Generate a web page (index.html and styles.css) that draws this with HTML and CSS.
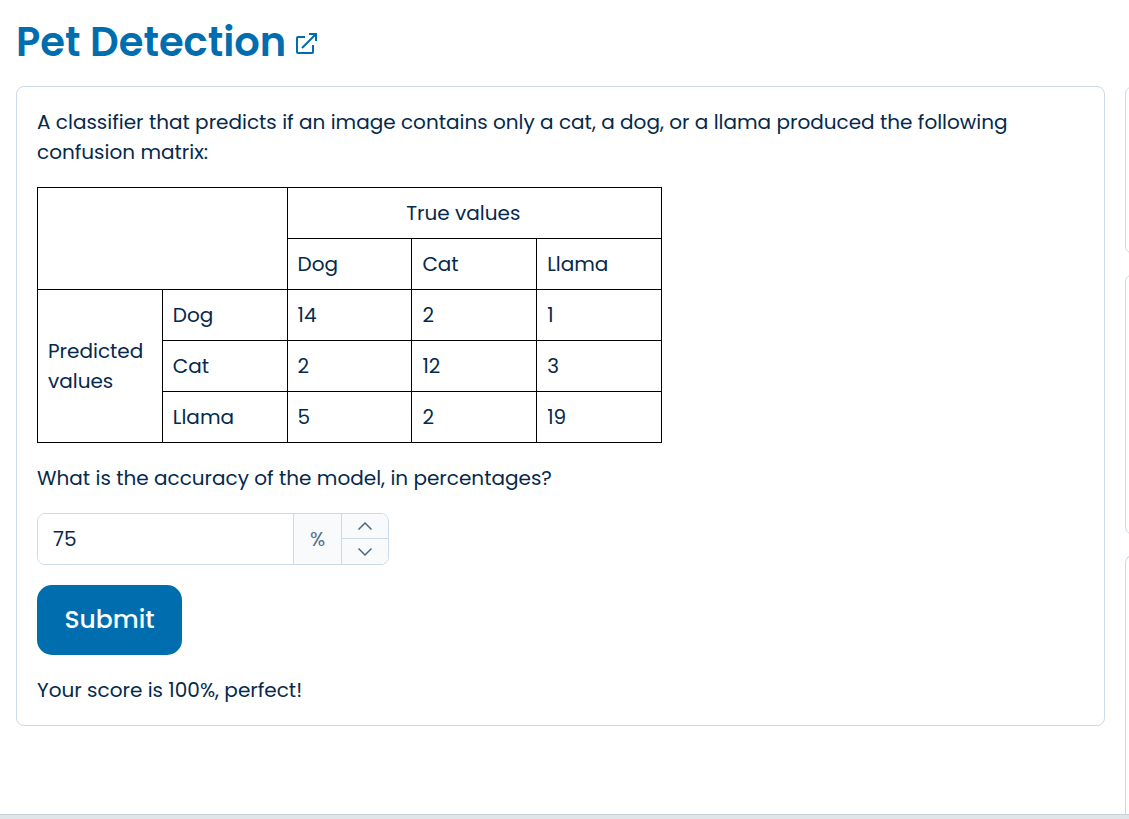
FILE: index.html
```html
<!DOCTYPE html>
<html lang="en">
<head>
<meta charset="utf-8">
<meta name="viewport" content="width=device-width, initial-scale=1">
<title>Pet Detection</title>
<link rel="stylesheet" href="styles.css">
</head>
<body>
<div class="page">
  <header class="header">
    <h1 class="title">Pet Detection</h1>
    <a class="open-link" href="#" aria-label="Open in new window">
      <svg class="open-icon" viewBox="0 0 22 22" aria-hidden="true"><path d="M9 4H2Q1 4 1 5V19Q1 20 2 20H16Q17 20 17 19V12M6 15L19.500 1.500M13 1H20V8"/></svg>
    </a>
  </header>
  <div class="workspace">
    <main class="card question">
      <p class="text">A classifier that predicts if an image contains only a cat, a dog, or a llama produced the following confusion matrix:</p>
      <table class="matrix">
        <tr><td colspan="2" rowspan="2"></td><th class="center" colspan="3" scope="colgroup">True values</th></tr>
        <tr><th scope="col">Dog</th><th scope="col">Cat</th><th scope="col">Llama</th></tr>
        <tr><th rowspan="3" scope="rowgroup">Predicted values</th><th scope="row">Dog</th><td>14</td><td>2</td><td>1</td></tr>
        <tr><th scope="row">Cat</th><td>2</td><td>12</td><td>3</td></tr>
        <tr><th scope="row">Llama</th><td>5</td><td>2</td><td>19</td></tr>
      </table>
      <label class="text" for="accuracy">What is the accuracy of the model, in percentages?</label>
      <div class="number-field">
        <input class="number-input" id="accuracy" type="text" inputmode="numeric" value="75">
        <span class="unit">%</span>
        <div class="stepper">
          <button class="step" type="button" aria-label="Increase"><svg class="chevron" viewBox="0 0 14 8" aria-hidden="true"><path d="M0.500 7.500L7 1L13.500 7.500"/></svg></button>
          <button class="step" type="button" aria-label="Decrease"><svg class="chevron" viewBox="0 0 14 8" aria-hidden="true"><path d="M0.500 0.500L7 7L13.500 0.500"/></svg></button>
        </div>
      </div>
      <button class="submit" type="button">Submit</button>
      <p class="text">Your score is 100%, perfect!</p>
    </main>
    <aside class="side">
      <div class="card panel panel-small"></div>
      <div class="card panel panel-medium"></div>
      <div class="card panel panel-fill"></div>
    </aside>
  </div>
  <footer class="bottom-bar"></footer>
</div>
</body>
</html>
```

FILE: styles.css
```css
* {
  box-sizing: border-box;
}

body {
  margin: 0;
  background: #fff;
  color: #05294b;
  font-family: Poppins, Inter, sans-serif;
  font-size: 20px;
  line-height: 30px;
}

.page {
  display: flex;
  flex-direction: column;
  min-height: 100vh;
}

.header {
  display: flex;
  align-items: center;
  gap: 10px;
  padding: 12px 16px 14px;
}

.title {
  margin: 0;
  color: #006eae;
  font-size: 40px;
  font-weight: 600;
  line-height: 60px;
}

.open-link {
  display: flex;
  padding-top: 4px;
}

.open-icon {
  width: 22px;
  height: 22px;
  fill: none;
  stroke: #006eae;
  stroke-width: 2;
}

.workspace {
  display: flex;
  flex: 1;
  align-items: flex-start;
  gap: 20px;
  padding-left: 16px;
  overflow: hidden;
}

.card {
  border: 1px solid #cbdae6;
  border-radius: 8px;
}

.question {
  display: flex;
  flex: 1;
  flex-direction: column;
  align-items: flex-start;
  gap: 20px;
  min-width: 0;
  padding: 20px;
}

.text {
  margin: 0;
}

.matrix {
  width: 625px;
  max-width: 100%;
  table-layout: fixed;
  border-collapse: collapse;
}

.matrix th,
.matrix td {
  padding: 10px;
  border: 1px solid #000;
  font-weight: 400;
  text-align: left;
}

.matrix .center {
  padding-right: 32px;
  text-align: center;
}

.number-field {
  display: flex;
  width: 352px;
  max-width: 100%;
  height: 52px;
  border: 1px solid #cbdae6;
  border-radius: 8px;
  overflow: hidden;
}

.number-input {
  flex: 1;
  min-width: 0;
  padding: 0 15px;
  border: 0;
  background: #fff;
  color: inherit;
  font: inherit;
}

.unit {
  display: flex;
  align-items: center;
  justify-content: center;
  width: 48px;
  border-left: 1px solid #cbdae6;
  background: #f8fafc;
  color: #557086;
}

.stepper {
  display: grid;
  grid-template-rows: 24px 1fr;
  width: 47px;
  border-left: 1px solid #cbdae6;
}

.step {
  display: flex;
  align-items: center;
  justify-content: center;
  padding: 0;
  border: 0;
  background: #f8fafc;
}

.step + .step {
  border-top: 1px solid #cbdae6;
}

.chevron {
  width: 14px;
  height: 8px;
  fill: none;
  stroke: #4c687f;
  stroke-width: 1.5;
}

.submit {
  width: 145px;
  padding: 20px 0;
  border: 0;
  border-radius: 15px;
  background: #006eae;
  color: #fff;
  font: inherit;
  font-size: 25px;
  font-weight: 500;
}

.side {
  display: flex;
  flex: 0 0 4px;
  flex-direction: column;
  align-self: stretch;
  gap: 20px;
  overflow: hidden;
}

.panel {
  width: 320px;
}

.panel-small {
  height: 168px;
}

.panel-medium {
  height: 261px;
}

.panel-fill {
  flex: 1;
  border-bottom: 0;
  border-radius: 8px 8px 0 0;
}

.bottom-bar {
  height: 5px;
  border-top: 1px solid #c6d0d6;
  background: #dfe5e8;
}
```
